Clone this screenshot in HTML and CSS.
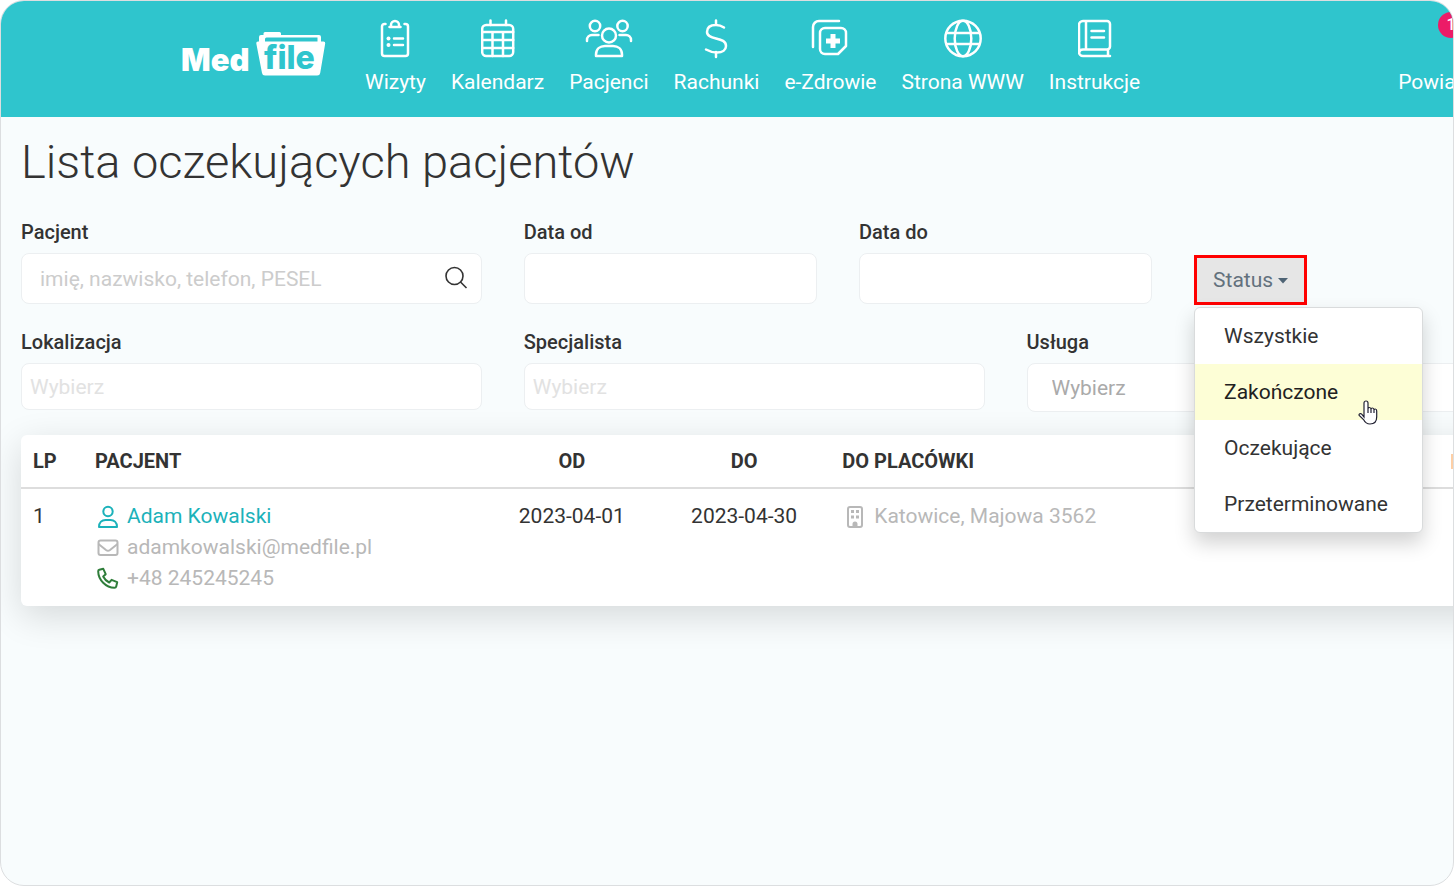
FILE: index.html
```html
<!DOCTYPE html>
<html lang="pl">
<head>
<meta charset="utf-8">
<meta name="viewport" content="width=device-width, initial-scale=1">
<title>Lista oczekujących pacjentów – MedFile</title>
<link rel="stylesheet" href="styles.css">
</head>
<body>
<div class="frame">
  <header class="topbar">
    <a class="logo" href="#" aria-label="MedFile">
      <svg width="144" height="48" viewBox="0 0 144 48">
        <text class="logo-text logo-med" x="-1" y="40" fill="#fff">Med</text>
        <path d="M77 12V6q0-2 2-2h2.500V2.500Q81.500 1 83 1h14.500Q99 1 99 2.500V4h38q2 0 2 2v6z" fill="#fff"/>
        <path d="M83 11V8q0-1.500 1.500-1.500H135.500V11z" fill="#2fc5cd"/>
        <path d="M76 10.500h65.500q2 0 1.700 2l-5 29.500q-.4 2.500-3 2.500H83q-2.600 0-3-2.500L74.300 12.500q-.3-2 1.700-2z" fill="#fff"/>
        <text class="logo-text" x="82" y="38" fill="#2fc5cd">file</text>
      </svg>
    </a>
    <nav class="menu">
      <a href="#">
        <svg width="30" height="40" viewBox="0 0 30 40"><path d="M5.500 5H4.500A2.500 2.500 0 0 0 2 7.500v27A2.500 2.500 0 0 0 4.500 37h21a2.500 2.500 0 0 0 2.500-2.500v-27A2.500 2.500 0 0 0 25.500 5h-1M9.500 8h11M11 7.500V6a4 4 0 0 1 8 0v1.500M14 19.500h9M14 26h9"/><circle class="dot" cx="8.500" cy="19.500" r="2"/><circle class="dot" cx="8.500" cy="26" r="2"/></svg>
        <span>Wizyty</span>
      </a>
      <a href="#">
        <svg width="34" height="40" viewBox="0 0 34 40"><rect x="1.200" y="6" width="31" height="31" rx="4"/><path d="M9.500 1.500V6M25 1.500V6M1.200 13h31M1.200 21h31M1.200 29h31M11.500 13v24M22 13v24"/></svg>
        <span>Kalendarz</span>
      </a>
      <a href="#">
        <svg width="48" height="40" viewBox="0 0 48 40"><circle cx="10" cy="7" r="5.200"/><circle cx="37.500" cy="7" r="5.200"/><circle cx="24" cy="16.500" r="7"/><path d="M2 22v-1a5 5 0 0 1 5-5h6.500M46 22v-1a5 5 0 0 0-5-5h-6.500M11 37h26v-1.500C37 30 33 27 28 27h-8c-5 0-9 3-9 8.500z"/></svg>
        <span>Pacjenci</span>
      </a>
      <a href="#">
        <svg width="24" height="40" viewBox="0 0 24 40"><path d="M12 1.500V6M12 33v5M20 8.500C17 6.500 14.500 6 12 6 6.500 6 3 8.500 3 13c0 4 4 5.300 9 6.500 5.500 1.300 10 2.500 10 7.500 0 4-3.500 6.500-9 6.500-4 0-7.500-1-11-3"/></svg>
        <span>Rachunki</span>
      </a>
      <a href="#">
        <svg width="38" height="40" viewBox="0 0 38 40"><path d="M2 28V8a6 6 0 0 1 6-6h20M14 9h16a5 5 0 0 1 5 5v13l-8 8H14a5 5 0 0 1-5-5V14a5 5 0 0 1 5-5z"/><path class="cross" d="M22 15v14M15 22h14"/></svg>
        <span>e-Zdrowie</span>
      </a>
      <a href="#">
        <svg width="40" height="40" viewBox="0 0 40 40"><circle cx="20" cy="19.500" r="17.700"/><ellipse cx="20" cy="19.500" rx="8.300" ry="17.700"/><path d="M4 14h32M4 25h32"/></svg>
        <span>Strona WWW</span>
      </a>
      <a href="#">
        <svg width="34" height="40" viewBox="0 0 34 40"><path d="M32 37H5a4 4 0 0 1-4-4V6a4 4 0 0 1 4-4h24a3 3 0 0 1 3 3v22.500a3 3 0 0 1-3 3H5a4 4 0 0 0-4 3.500M8 2v28M30 30.500V37M13.500 12H26M13.500 18.500H26"/></svg>
        <span>Instrukcje</span>
      </a>
    </nav>
    <a class="alerts" href="#">
      <span>Powia</span>
      <span class="badge">1</span>
    </a>
  </header>

  <main class="content">
    <h1>Lista oczekujących pacjentów</h1>
    <form class="filters">
      <div class="field wide">
        <label for="patient">Pacjent</label>
        <div class="search">
          <input id="patient" type="text" placeholder="imię, nazwisko, telefon, PESEL">
          <button type="button" aria-label="Szukaj"><svg width="24" height="24" viewBox="0 0 24 24"><circle cx="10.500" cy="10" r="8.500"/><path d="M16.500 16l6 6"/></svg></button>
        </div>
      </div>
      <div class="field">
        <label for="from">Data od</label>
        <input id="from" type="text">
      </div>
      <div class="field">
        <label for="to">Data do</label>
        <input id="to" type="text">
      </div>
      <div class="field status">
        <button class="toggle" type="button" aria-haspopup="true" aria-expanded="true">Status<svg width="10" height="6" viewBox="0 0 10 6"><path d="M0 0h10L5 5.500z"/></svg></button>
        <div class="dropdown">
          <a href="#">Wszystkie</a>
          <a class="active" href="#">Zakończone
            <svg class="pointer" width="20" height="26" viewBox="0 0 20 26"><path d="M6 14.500V3a2 2 0 0 1 4 0v6q0-1.500 1.500-1.500T13 9.500q0-1.500 1.500-1.500t1.500 2q0-1 1.300-1 1.400 0 1.400 2v6c0 4-2.200 7-6.700 7-3.500 0-5-1.500-6.500-4.500L1.200 15.500C.5 14 2.500 13 3.700 14.200L6 17zM10 9v4M13 9.500V13M16 10v3"/></svg>
          </a>
          <a href="#">Oczekujące</a>
          <a href="#">Przeterminowane</a>
        </div>
      </div>
      <div class="field wide first">
        <label for="place">Lokalizacja</label>
        <input class="picker" id="place" type="text" placeholder="Wybierz">
      </div>
      <div class="field wide">
        <label for="doctor">Specjalista</label>
        <input class="picker" id="doctor" type="text" placeholder="Wybierz">
      </div>
      <div class="field wide">
        <label for="service">Usługa</label>
        <select id="service"><option>Wybierz</option></select>
      </div>
    </form>

    <table class="list">
      <colgroup><col class="c-lp"><col class="c-patient"><col class="c-date"><col class="c-date"><col class="c-place"><col></colgroup>
      <thead>
        <tr><th>LP</th><th>PACJENT</th><th class="mid">OD</th><th class="mid">DO</th><th>DO PLACÓWKI</th><th><span class="flag"></span></th></tr>
      </thead>
      <tbody>
        <tr>
          <td>1</td>
          <td>
            <div class="line name"><svg width="22" height="24" viewBox="0 0 22 24"><circle cx="11" cy="6.500" r="4.700"/><path d="M2 22c0-4.500 3-7 6.500-7h5c3.500 0 6.500 2.500 6.500 7z"/></svg><a href="#">Adam Kowalski</a></div>
            <div class="line"><svg width="22" height="24" viewBox="0 0 22 24"><rect x="1.500" y="4.500" width="19" height="14.500" rx="2"/><path d="M1.500 8l7.500 6q2 1.500 4 0l7.500-6"/></svg><span>adamkowalski@medfile.pl</span></div>
            <div class="line phone"><svg width="22" height="24" viewBox="0 0 22 24"><path d="M2.300 2.800l4-1 2.400 5.400L6.200 9.500c1.300 2.700 3 4.600 6 6l2.400-2.700 5.600 2.400-1 4.300q-.3 1.300-1.700 1.300C9 20.600 1.200 13 1.200 4.300q0-1.200 1.100-1.500z"/></svg><span>+48 245245245</span></div>
          </td>
          <td class="mid">2023-04-01</td>
          <td class="mid">2023-04-30</td>
          <td>
            <div class="line"><svg width="22" height="24" viewBox="0 0 22 24"><rect x="4" y="2" width="14" height="20" rx="2"/><path class="solid" d="M7 5h3v3H7zM12 5h3v3h-3zM7 10.500h3v3H7zM12 10.500h3v3h-3zM8.500 22v-3a2.500 2.500 0 0 1 5 0v3z"/></svg><span>Katowice, Majowa 3562</span></div>
          </td>
          <td></td>
        </tr>
      </tbody>
    </table>
  </main>
</div>
</body>
</html>
```

FILE: styles.css
```css
* { box-sizing: border-box; }

body {
  margin: 0;
  background: #fff;
  color: #333;
  font: 20px/30px Roboto, sans-serif;
}

a { color: inherit; text-decoration: none; }

.frame {
  min-height: 100vh;
  overflow: hidden;
  border: 1px solid #dcdee0;
  border-radius: 24px;
  background: #f8fcfd;
}

/* Top bar */
.topbar {
  display: flex;
  align-items: flex-start;
  height: 116px;
  padding: 18px 0 0 181px;
  background: #2fc5cd;
  color: #fff;
  font-size: 21px;
  white-space: nowrap;
}

.logo { flex: none; margin-top: 12px; }
.logo svg { display: block; }
.logo-text { font: 800 32px Inter, sans-serif; }
.logo-med { font-size: 31px; font-weight: 900; }

.menu { display: flex; flex: none; gap: 25px; margin-left: 39px; }

.menu a {
  display: flex;
  flex-direction: column;
  align-items: center;
  gap: 8px;
}

.menu svg {
  fill: none;
  stroke: #fff;
  stroke-width: 2.5;
  stroke-linecap: round;
  stroke-linejoin: round;
}
.menu .dot { fill: #fff; stroke: none; }
.menu .cross { stroke-width: 5; stroke-linecap: butt; }

.alerts { position: relative; flex: none; margin: 48px 0 0 258px; }

.badge {
  position: absolute;
  top: -55px;
  left: 40px;
  width: 26px;
  border-radius: 13px;
  background: #ec1b67;
  font-size: 16px;
  font-weight: 500;
  line-height: 26px;
  text-align: center;
}

/* Filters */
.content { padding-left: 20px; }

h1 {
  margin: 0;
  padding: 17px 0 27px;
  font-size: 47px;
  font-weight: 300;
  line-height: 56px;
}

.filters {
  display: grid;
  grid-template-columns: repeat(12, minmax(0, 1fr));
  gap: 22px 42px;
  width: 137.5%;
}

.field { grid-column: span 2; }
.field.wide { grid-column: span 3; }
.field.first { grid-column: 1 / span 3; }

.field label {
  display: block;
  margin-bottom: 6px;
  font-weight: 500;
}

.field input,
.field select {
  display: block;
  width: 100%;
  height: 51px;
  padding: 0 18px;
  border: 1px solid #eceff1;
  border-radius: 8px;
  background: #fff;
  color: #333;
  font: inherit;
  font-size: 21px;
}

.field select { height: 49px; padding: 0 24px; color: #aaa; appearance: none; }
.field input::placeholder { color: #ccc; opacity: 1; }
.field .picker { height: 47px; padding: 0 8px; }
.field .picker::placeholder { color: #e2e2e2; }

.search { position: relative; }
.search button {
  position: absolute;
  top: 13px;
  right: 14px;
  padding: 0;
  border: 0;
  background: none;
}
.search svg { display: block; fill: none; stroke: #333; stroke-width: 1.6; }

.status { position: relative; padding-top: 38px; }

.toggle {
  display: flex;
  align-items: center;
  gap: 5px;
  height: 50px;
  padding: 0 16px;
  border: 3px solid #f00;
  background: #e6e6e6;
  color: #63717d;
  font: inherit;
  font-size: 21px;
}
.toggle svg { margin-top: 2px; fill: #4f6475; }

.dropdown {
  position: absolute;
  z-index: 1;
  top: 90px;
  left: 0;
  width: 229px;
  overflow: hidden;
  border: 1px solid #d9dbdc;
  border-radius: 6px;
  background: #fff;
  box-shadow: 0 10px 20px rgba(0, 0, 0, 0.18);
  font-size: 21px;
}
.dropdown a { display: block; position: relative; padding: 13px 29px; }
.dropdown .active { background: #fdfed6; color: #212121; }

.pointer {
  position: absolute;
  top: 36px;
  right: 44px;
  fill: #fff;
  stroke: #223;
  stroke-width: 1.2;
}

/* Patient list */
.list {
  width: 137.5%;
  margin-top: 23px;
  border-collapse: separate;
  border-spacing: 0;
  border-radius: 6px;
  background: #fff;
  box-shadow: 0 10px 36px rgba(0, 0, 0, 0.14);
  table-layout: fixed;
}

.c-lp { width: 3.15%; }
.c-patient { width: 20.45%; }
.c-date { width: 8.75%; }
.c-place { width: 30.9%; }

.list th {
  padding: 11px 12px;
  border-bottom: 2px solid #ddd;
  font-weight: 700;
  text-align: left;
}
.list td { padding: 12px; font-size: 21px; line-height: 31px; vertical-align: top; }
.list .mid { text-align: center; }

.flag { display: block; width: 12px; height: 15px; background: #fdcfa6; }

.line { display: flex; align-items: center; gap: 8px; padding-left: 2px; color: #b8b8b8; }
.line svg { flex: none; fill: none; stroke: currentColor; stroke-width: 2; stroke-linejoin: round; }
.line .solid { fill: currentColor; stroke: none; }
.name { color: #1cb2ba; }
.phone svg { color: #2f7d3a; }
```
